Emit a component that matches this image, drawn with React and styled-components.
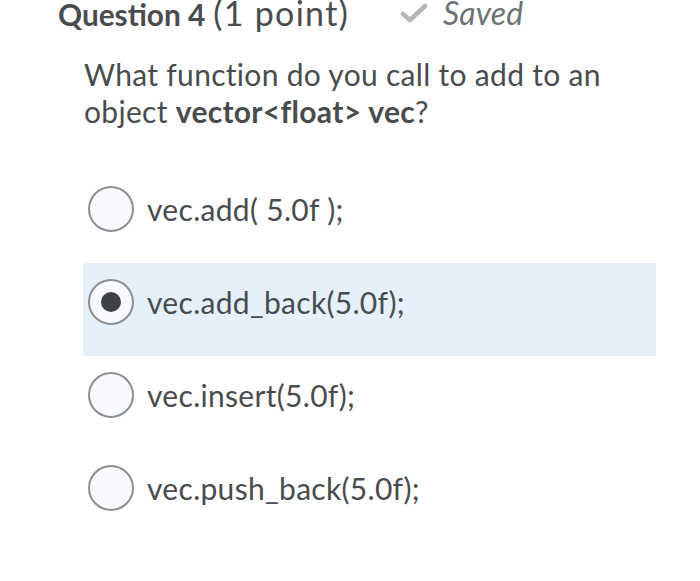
import React from "react";
import styled, { createGlobalStyle } from "styled-components";

const Global = createGlobalStyle`
  html, body { margin: 0; padding: 0; background: #ffffff; }
  body { font-family: Lato, "Open Sans", sans-serif; color: #494c4e; }
`;

const Page = styled.div`
  width: 700px;
  height: 581px;
  overflow: hidden;
  box-sizing: border-box;
`;

const Header = styled.div`
  display: flex;
  align-items: baseline;
  padding-left: 58px;
  height: 26px;
  line-height: 26px;
`;

const Title = styled.span`
  font-size: 29.8px;
  font-weight: 700;
  color: #494c4e;
`;

const Points = styled.span`
  font-size: 34px;
  font-weight: 400;
  letter-spacing: 1.3px;
  margin-left: 8px;
`;

const Status = styled.span`
  display: flex;
  align-items: center;
  margin-left: 51px;
  font-size: 32px;
  letter-spacing: 0.1px;
  font-style: italic;
  color: #6e7376;
  gap: 15px;
  align-self: center;
`;

const Question = styled.p`
  margin: 30px 0 0 84px;
  font-size: 30px;
  letter-spacing: 0.3px;
  line-height: 37px;
  width: 580px;
`;

const Options = styled.div`
  margin: 40px 0 0 83px;
  width: 573px;
  display: flex;
  flex-direction: column;
`;

const Row = styled.label`
  display: flex;
  align-items: flex-start;
  box-sizing: border-box;
  height: 93px;
  padding: 16px 5px 0;
  gap: 13px;
  background: ${(p) => (p.$selected ? "#e6f0fb" : "transparent")};
`;

const Radio = styled.span`
  width: 46px;
  height: 46px;
  box-sizing: border-box;
  border-radius: 50%;
  border: 2px solid #8b8f92;
  background: #f9fafd;
  display: flex;
  align-items: center;
  justify-content: center;
  flex: none;
`;

const Dot = styled.span`
  width: 20px;
  height: 20px;
  border-radius: 50%;
  background: #3f4244;
`;

const OptionText = styled.span`
  font-size: 30px;
  letter-spacing: 0.3px;
  line-height: 46px;
  color: #494c4e;
`;

const Check = () => (
  <svg width="28" height="20" viewBox="0 0 28 20" fill="none">
    <path d="M3 11 L10 17 L25 3" stroke="#b3b7ba" strokeWidth="4.6" strokeLinecap="round" strokeLinejoin="round" />
  </svg>
);

const options = [
  "vec.add( 5.0f );",
  "vec.add_back(5.0f);",
  "vec.insert(5.0f);",
  "vec.push_back(5.0f);",
];

export default function App() {
  return (
    <Page>
      <Global />
      <Header>
        <Title>Question 4</Title>
        <Points>(1 point)</Points>
        <Status>
          <Check />
          Saved
        </Status>
      </Header>
      <Question>
        What function do you call to add to an object <b>vector&lt;float&gt; vec</b>?
      </Question>
      <Options>
        {options.map((o, i) => (
          <Row key={o} $selected={i === 1}>
            <Radio>{i === 1 && <Dot />}</Radio>
            <OptionText>{o}</OptionText>
          </Row>
        ))}
      </Options>
    </Page>
  );
}
